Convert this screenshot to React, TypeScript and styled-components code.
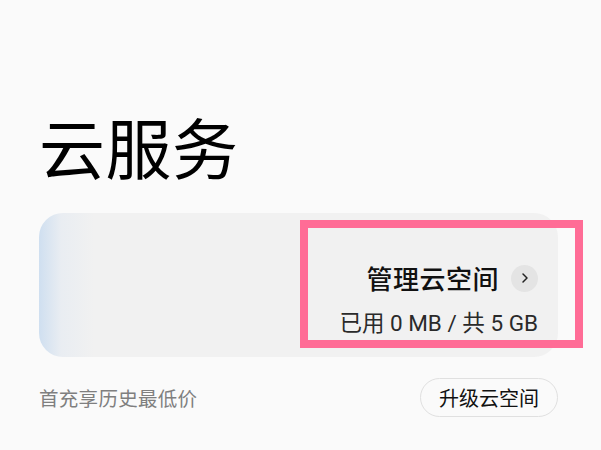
import styled, { createGlobalStyle } from 'styled-components';

const GlobalStyle = createGlobalStyle`
    html, body {
        margin: 0;
        padding: 0;
        background: #fafafa;
    }
    body {
        font-family: "Noto Sans CJK SC", "Noto Sans", sans-serif;
    }
    * {
        box-sizing: border-box;
    }
`

const Page = styled.div`
    width: 601px;
    height: 450px;
    padding: 102px 43px 0 39px;
    display: flex;
    flex-direction: column;
    overflow: hidden;
`

const Title = styled.h1`
    margin: 0 0 0 0;
    font-size: 66px;
    line-height: 86px;
    font-weight: 400;
    color: #000;
    letter-spacing: 0.5px;
`

const Card = styled.div`
    position: relative;
    margin-top: 25px;
    height: 144px;
    border-radius: 24px;
    background: linear-gradient(to right, #cfdff0 0px, #e9edf2 22px, #f1f1f1 55px);
    display: flex;
    flex-direction: column;
    align-items: flex-end;
    justify-content: flex-end;
    padding: 0 20px 20px 0;
`

const ManageRow = styled.div`
    display: flex;
    align-items: center;
    gap: 12px;
    margin-bottom: 14px;
`

const ManageText = styled.span`
    font-size: 26px;
    line-height: 34px;
    color: #111;
    font-weight: 500;
    letter-spacing: 0.5px;
`

const Chevron = styled.span`
    width: 27px;
    height: 27px;
    border-radius: 50%;
    background: #e4e4e4;
    display: flex;
    align-items: center;
    justify-content: center;
`

const Usage = styled.span`
    font-family: Roboto, "Noto Sans CJK SC", sans-serif;
    font-size: 22.5px;
    line-height: 28px;
    color: #2a2a2a;
`

const Highlight = styled.div`
    position: absolute;
    left: 261px;
    top: 7px;
    width: 283px;
    height: 128px;
    border: 8px solid #ff6c96;
    pointer-events: none;
`

const Footer = styled.div`
    margin-top: 21px;
    display: flex;
    align-items: center;
    justify-content: space-between;
`

const Promo = styled.span`
    font-size: 19.5px;
    color: #7f7f7f;
    letter-spacing: 0.3px;
`

const UpgradeButton = styled.button`
    width: 138px;
    height: 39px;
    border-radius: 20px;
    border: 1px solid #e0e0e0;
    background: #fafafa;
    font-family: "Noto Sans CJK SC", sans-serif;
    font-size: 20px;
    color: #111;
    padding: 0;
`

export default function App() {
    return (
        <>
            <GlobalStyle />
            <Page>
                <Title>云服务</Title>
                <Card>
                    <ManageRow>
                        <ManageText>管理云空间</ManageText>
                        <Chevron>
                            <svg width="12" height="12" viewBox="0 0 12 12">
                                <path d="M4 2 L8 6 L4 10" fill="none" stroke="#222" strokeWidth="1.5" strokeLinecap="round" strokeLinejoin="round" />
                            </svg>
                        </Chevron>
                    </ManageRow>
                    <Usage>已用 0 MB / 共 5 GB</Usage>
                    <Highlight />
                </Card>
                <Footer>
                    <Promo>首充享历史最低价</Promo>
                    <UpgradeButton>升级云空间</UpgradeButton>
                </Footer>
            </Page>
        </>
    )
}
